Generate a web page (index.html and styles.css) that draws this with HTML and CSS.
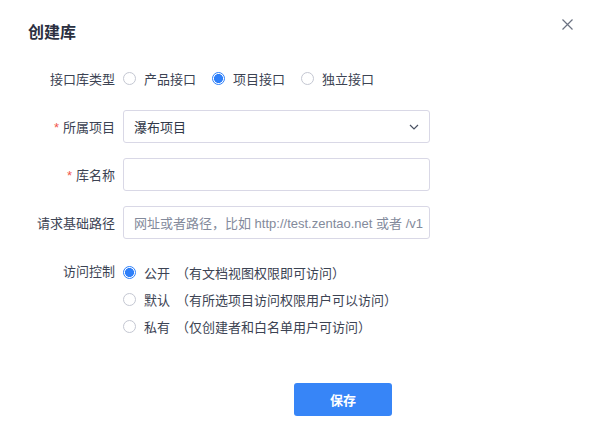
FILE: index.html
```html
<!DOCTYPE html>
<html lang="zh-CN">
<head>
<meta charset="utf-8">
<title>创建库</title>
<link rel="stylesheet" href="styles.css">
</head>
<body>
<div class="dialog">
  <div class="header">
    <h1 class="title">创建库</h1>
    <button class="close" aria-label="关闭">
      <svg width="11" height="11" viewBox="0 0 11 11"><path d="M0.5 0.5 L10.5 10.5 M10.5 0.5 L0.5 10.5" stroke="#6b7282" stroke-width="1.2" fill="none"/></svg>
    </button>
  </div>
  <form class="form">
    <div class="row">
      <label class="label">接口库类型</label>
      <div class="radios">
        <label class="radio"><span class="dot"></span>产品接口</label>
        <label class="radio"><span class="dot checked"></span>项目接口</label>
        <label class="radio"><span class="dot"></span>独立接口</label>
      </div>
    </div>
    <div class="row">
      <label class="label"><span class="req">*</span>所属项目</label>
      <div class="control select">
        <span>瀑布项目</span>
        <svg class="chev" width="10" height="6" viewBox="0 0 10 6"><path d="M1 1 L5 5 L9 1" stroke="#4a5263" stroke-width="1.2" fill="none"/></svg>
      </div>
    </div>
    <div class="row">
      <label class="label"><span class="req">*</span>库名称</label>
      <div class="control"></div>
    </div>
    <div class="row">
      <label class="label">请求基础路径</label>
      <div class="control placeholder"><span>网址或者路径，比如 http://test.zentao.net 或者 /v1</span></div>
    </div>
    <div class="row access">
      <label class="label">访问控制</label>
      <div class="vradios">
        <label class="radio"><span class="dot checked"></span>公开<span class="note">（有文档视图权限即可访问）</span></label>
        <label class="radio"><span class="dot"></span>默认<span class="note">（有所选项目访问权限用户可以访问）</span></label>
        <label class="radio"><span class="dot"></span>私有<span class="note">（仅创建者和白名单用户可访问）</span></label>
      </div>
    </div>
    <div class="actions">
      <button type="button" class="save">保存</button>
    </div>
  </form>
</div>
</body>
</html>
```

FILE: styles.css
```css
* { box-sizing: border-box; }
html, body { margin: 0; padding: 0; background: #fff; }
body {
  font-family: "Liberation Sans", "Noto Sans CJK SC", sans-serif;
  font-size: 13px;
  color: #3c4353;
}
.dialog {
  width: 592px;
  height: 443px;
  padding: 21px 19px 0 28px;
}
.header {
  display: flex;
  justify-content: space-between;
  align-items: flex-start;
  height: 24px;
}
.title {
  margin: 0;
  font-size: 16px;
  line-height: 24px;
  font-weight: 700;
  color: #2b3041;
}
.close {
  border: 0;
  background: none;
  padding: 0;
  margin-top: -2px;
  width: 11px;
  height: 11px;
  display: flex;
}
.form {
  margin-top: 17px;
  display: flex;
  flex-direction: column;
}
.row {
  display: flex;
  align-items: center;
  min-height: 33px;
  margin-bottom: 15px;
}
.label {
  width: 87px;
  margin-right: 8px;
  text-align: right;
  white-space: nowrap;
  color: #3c4353;
}
.req {
  color: #f1564d;
  margin-right: 4px;
}
.radios {
  display: flex;
  gap: 16px;
}
.radio {
  display: flex;
  align-items: center;
  white-space: nowrap;
  color: #3c4353;
}
.dot {
  width: 13px;
  height: 13px;
  border-radius: 50%;
  border: 1px solid #c4c7d2;
  margin: 0 8px 0 0;
  background: #fff;
  flex: none;
}
.dot.checked {
  border-color: #2e7ff9;
  background: radial-gradient(circle, #2e7ff9 0 4.2px, #fff 4.8px);
}
.control {
  width: 307px;
  height: 33px;
  border: 1px solid #d9d8e6;
  border-radius: 3px;
  display: flex;
  align-items: center;
  padding: 0 6px 0 10px;
  overflow: hidden;
  white-space: nowrap;
}
.select { justify-content: space-between; color: #313848; padding-right: 10px; }
.placeholder { color: #838a9b; }
.access {
  align-items: flex-start;
  margin-top: 4px;
}
.access .label { line-height: 27px; }
.vradios {
  display: flex;
  flex-direction: column;
  padding-top: 1px;
}
.vradios .radio { height: 27px; }
.note { margin-left: 6px; }
.actions {
  display: flex;
  padding-left: 266px;
  margin-top: 28px;
}
.save {
  width: 98px;
  height: 33px;
  border: 0;
  border-radius: 3px;
  background: #3785f7;
  color: #fff;
  font-family: inherit;
  font-size: 13px;
  font-weight: 700;
}
```
